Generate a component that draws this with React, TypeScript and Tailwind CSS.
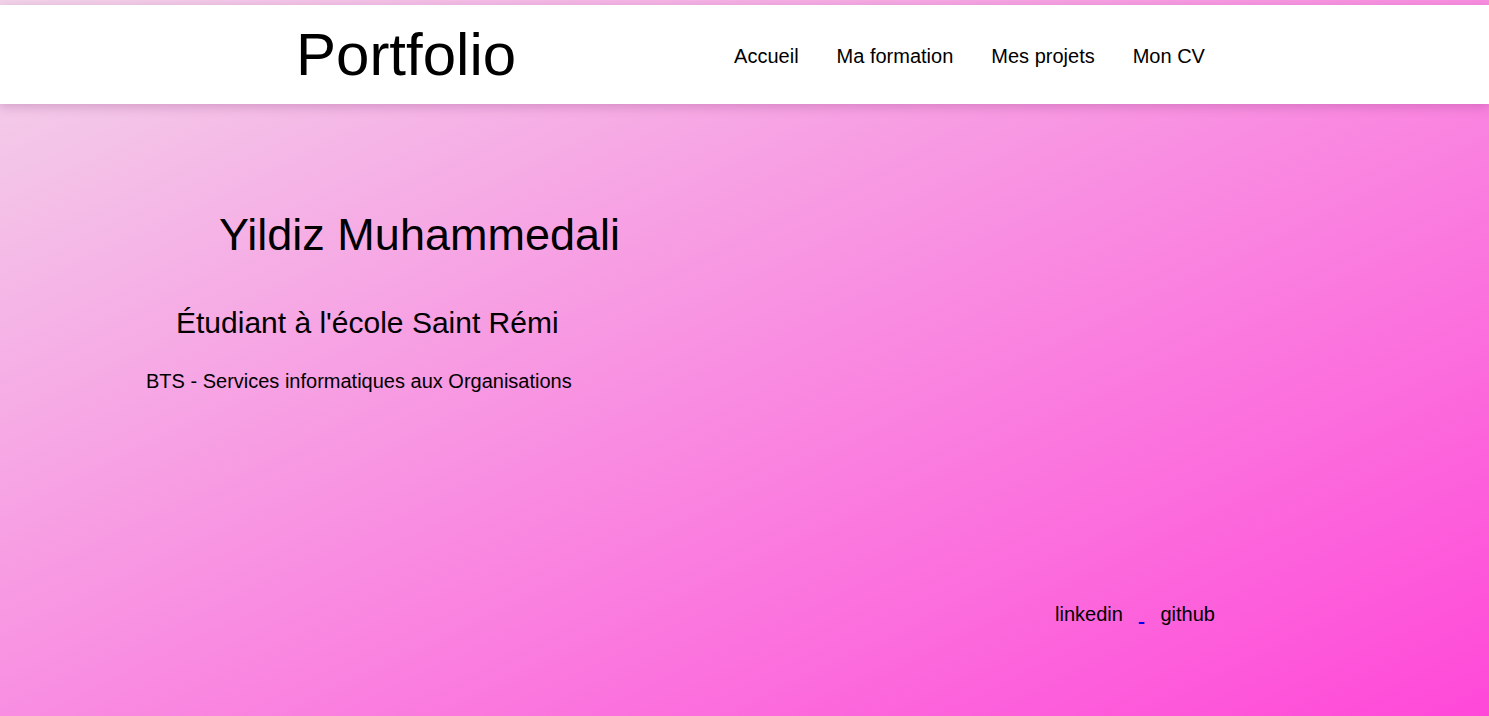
import React from "react";

export default function App() {
  return (
    <div
      className="min-h-screen w-full pt-[5px] bg-[linear-gradient(to_bottom_right,#f2d4ea,#ff48d8)] text-black"
      style={{ fontFamily: '"Liberation Sans", Arial, sans-serif' }}
    >
      <header className="h-[99px] bg-white flex items-center shadow-[0_3px_10px_rgba(120,40,100,0.25)]">
        <h1 className="ml-[296px] text-[60px] leading-none font-normal">Portfolio</h1>
        <nav className="ml-[218px] mt-[3px] flex gap-[38px] text-[20px] leading-none">
          <a href="#">Accueil</a>
          <a href="#">Ma formation</a>
          <a href="#">Mes projets</a>
          <a href="#">Mon CV</a>
        </nav>
      </header>
      <main className="flex flex-col">
        <h2 className="mt-[108px] ml-[219px] text-[45px] leading-none font-normal">Yildiz Muhammedali</h2>
        <h3 className="mt-[51px] ml-[176px] text-[30px] leading-none font-normal">Étudiant à l'école Saint Rémi</h3>
        <p className="mt-[33px] ml-[146px] text-[20px] leading-none">BTS - Services informatiques aux Organisations</p>
        <div className="mt-[213px] ml-[1055px] flex gap-[16px] text-[20px] leading-none">
          <a href="#">linkedin</a>
          <a href="#" className="underline text-[#0000ee]">&nbsp;</a>
          <a href="#">github</a>
        </div>
      </main>
    </div>
  );
}
